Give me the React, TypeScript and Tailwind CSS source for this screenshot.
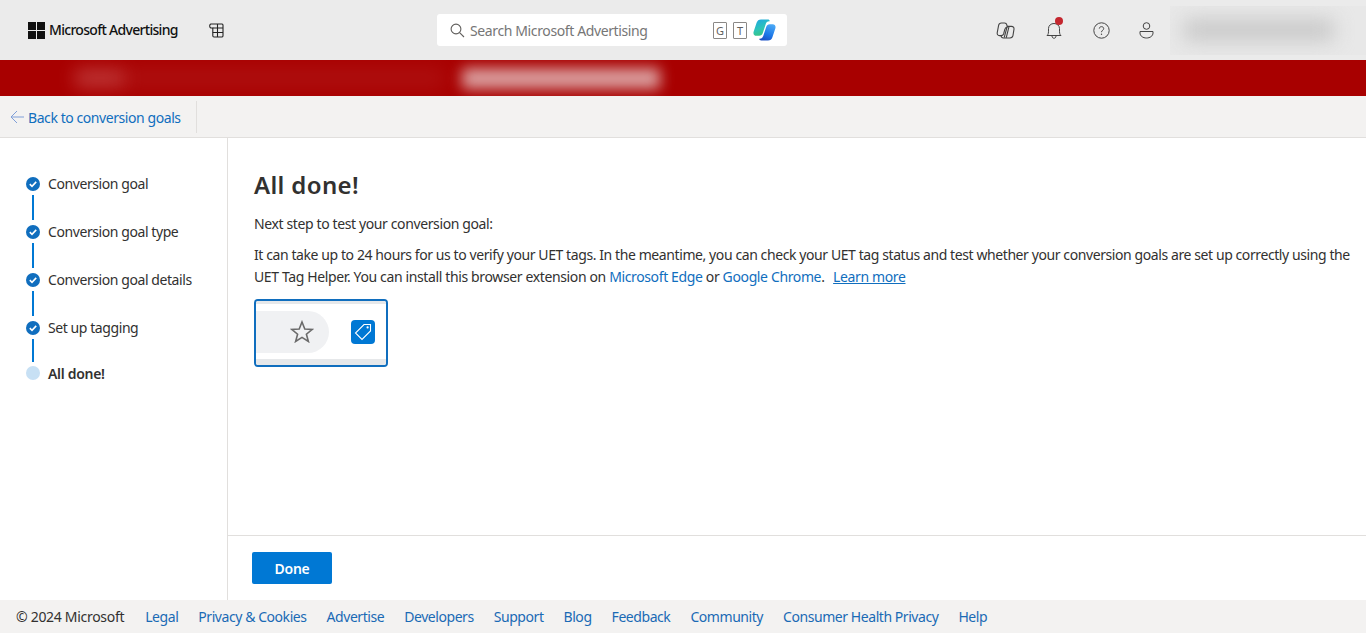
import React from "react";

function WinLogo() {
  return (
    <svg width="17" height="17" viewBox="0 0 17 17" className="shrink-0">
      <rect x="0" y="0" width="8" height="8" fill="#111" />
      <rect x="9" y="0" width="8" height="8" fill="#111" />
      <rect x="0" y="9" width="8" height="8" fill="#111" />
      <rect x="9" y="9" width="8" height="8" fill="#111" />
    </svg>
  );
}

function Check() {
  return (
    <span className="w-[14px] h-[14px] rounded-full bg-[#106ebe] flex items-center justify-center shrink-0">
      <svg width="10" height="10" viewBox="0 0 10 10" fill="none">
        <path d="M1.8 5.2 L4 7.3 L8.2 2.9" stroke="#fff" strokeWidth="1.6" />
      </svg>
    </span>
  );
}

const steps = ["Conversion goal", "Conversion goal type", "Conversion goal details", "Set up tagging"];
const footer = ["Legal", "Privacy & Cookies", "Advertise", "Developers", "Support", "Blog", "Feedback", "Community", "Consumer Health Privacy", "Help"];

export default function App() {
  return (
    <div className="w-[1366px] h-[633px] flex flex-col overflow-hidden bg-white text-[14px] text-[#323130] font-['Noto_Sans','Open_Sans',sans-serif]">
      {/* Top bar */}
      <header className="h-[60px] bg-[#ebebeb] flex items-center shrink-0">
        <div className="flex items-center pl-[28px] w-[437px] shrink-0">
          <WinLogo />
          <span className="ml-[4px] -mt-[2px] text-[14px] font-medium text-[#111] tracking-[-0.7px] whitespace-nowrap">Microsoft Advertising</span>
          <svg width="15" height="15" viewBox="0 0 15 15" fill="none" stroke="#222" strokeWidth="1.1" className="ml-[31px]">
            <path d="M2 1 H13 A1.2 1.2 0 0 1 14 2.2 V12.8 A1.2 1.2 0 0 1 13 14 H5 A1.2 1.2 0 0 1 3.8 12.8 V5 H2 A1.6 1.6 0 0 1 0.8 3 A1.6 1.6 0 0 1 2 1Z" />
            <path d="M3.8 5 H14 M3.8 9.5 H14 M8.5 5 V14 M8.5 1 V5" />
          </svg>
        </div>
        <div className="w-[350px] h-[32px] bg-white rounded-[3px] flex items-center pl-[13px] pr-[11px] shrink-0">
          <svg width="15" height="15" viewBox="0 0 15 15" fill="none" stroke="#605e5c" strokeWidth="1.1">
            <circle cx="6" cy="6" r="4.9" />
            <path d="M9.6 9.6 L14 14" />
          </svg>
          <span className="ml-[5px] text-[#767676] text-[14px] tracking-[-0.38px] whitespace-nowrap">Search Microsoft Advertising</span>
          <span className="ml-auto w-[14px] h-[17px] border border-[#8a8886] rounded-[1px] text-[11px] leading-[15px] text-center text-[#605e5c]">G</span>
          <span className="ml-[6px] w-[14px] h-[17px] border border-[#8a8886] rounded-[1px] text-[11px] leading-[15px] text-center text-[#605e5c]">T</span>
          <svg width="23" height="22" viewBox="0 0 23 22" className="ml-[6px]">
            <defs>
              <linearGradient id="cpa" x1="0.2" y1="0" x2="0.6" y2="1">
                <stop offset="0" stopColor="#1fa8e0" />
                <stop offset="0.55" stopColor="#2cc4b8" />
                <stop offset="1" stopColor="#3cc47a" />
              </linearGradient>
              <linearGradient id="cpb" x1="0.7" y1="0" x2="0.3" y2="1">
                <stop offset="0" stopColor="#4aa8f5" />
                <stop offset="0.6" stopColor="#1d78e8" />
                <stop offset="1" stopColor="#1c4fc4" />
              </linearGradient>
            </defs>
            <path d="M8 0.5 H14.8 C16 0.5 16.6 1.2 16.8 2.2 C14.5 2 13.3 3.2 12.6 5.4 L9.8 14 C9.2 15.8 8 16.8 6.2 16.8 H3.4 C1.2 16.8 0 15 0.6 12.8 L3.6 3.8 C4.3 1.7 5.8 0.5 8 0.5Z" fill="url(#cpa)" />
            <path d="M15 21.5 H8.2 C7 21.5 6.4 20.8 6.2 19.8 C8.5 20 9.7 18.8 10.4 16.6 L13.2 8 C13.8 6.2 15 5.2 16.8 5.2 H19.6 C21.8 5.2 23 7 22.4 9.2 L19.4 18.2 C18.7 20.3 17.2 21.5 15 21.5Z" fill="url(#cpb)" />
          </svg>
        </div>
        <div className="flex items-center ml-[209px] shrink-0">
          <svg width="19" height="17" viewBox="0 0 19 17" fill="none" stroke="#444" strokeWidth="1.1">
            <path d="M5.4 1 H8.6 C9.8 1 10.6 1.8 10.8 3 L11.4 5 C9.8 5 9.2 6 8.8 7.4 L7.6 12 C7.2 13.2 6.2 13.6 5 13.6 H3.4 C1.8 13.6 1 12.2 1.2 10.8 L2.6 3.4 C2.9 1.9 4 1 5.4 1Z" />
            <path d="M10.8 4.4 H15.4 C17.2 4.4 18.2 5.6 18 7.2 L17 13.4 C16.7 15 15.6 16 14 16 H7.4 C6.2 16 5.2 15 5 13.7" />
            <path d="M13 4.6 L10.2 15.8 M11 5 L8.2 15.6" />
          </svg>
          <div className="relative ml-[31px] w-[16px] h-[20px] -mt-[2px]">
            <svg width="16" height="20" viewBox="0 0 16 20" fill="none" stroke="#444" strokeWidth="1" className="mt-[2px]">
              <path d="M1 14.5 C2.5 13.5 2.5 11.5 2.5 9 V7.5 C2.5 4.5 5 2.5 8 2.5 C11 2.5 13.5 4.5 13.5 7.5 V9 C13.5 11.5 13.5 13.5 15 14.5Z" />
              <path d="M6 15 C6 18 10 18 10 15" />
            </svg>
            <span className="absolute -top-[2px] left-[9px] w-[8px] h-[8px] rounded-full bg-[#c4262e]" />
          </div>
          <svg width="17" height="17" viewBox="0 0 17 17" fill="none" className="ml-[31px]">
            <circle cx="8.5" cy="8.5" r="7.7" stroke="#444" strokeWidth="1" />
            <path d="M6.3 6.6 C6.3 4 10.7 4 10.7 6.6 C10.7 8.3 8.5 8.2 8.5 10.2" stroke="#444" strokeWidth="1" />
            <circle cx="8.5" cy="12.3" r="0.7" fill="#444" />
          </svg>
          <svg width="15" height="17" viewBox="0 0 15 17" fill="none" stroke="#444" strokeWidth="1" className="ml-[29px]">
            <circle cx="7.5" cy="4" r="3.3" />
            <path d="M1 9.5 H14 V11 C14 14 11 16 7.5 16 C4 16 1 14 1 11Z" />
          </svg>
          <div className="ml-[16px] w-[196px] h-[49px] bg-[#e8e8e8] overflow-hidden flex items-center justify-start pl-[14px]">
            <div className="w-[150px] h-[20px] bg-[#c6c6c6] blur-[10px]" />
          </div>
        </div>
      </header>

      {/* Red banner */}
      <div className="h-[36px] bg-[#a80000] shrink-0 flex items-center overflow-hidden">
        <div className="ml-[75px] w-[50px] h-[18px] bg-[#c85050] opacity-70 blur-[9px]" />
        <div className="w-[320px] h-[22px] bg-[#c04040] opacity-25 blur-[10px]" />
        <div className="ml-[17px] w-[198px] h-[21px] bg-[#e0b0b0] opacity-90 blur-[7px]" />
      </div>

      {/* Back bar */}
      <div className="h-[42px] bg-[#f3f2f1] border-b border-[#e1dfdd] flex items-center shrink-0">
        <div className="h-[32px] w-[197px] border-r border-[#e1dfdd] flex items-center pl-[10px]">
          <svg width="15" height="14" viewBox="0 0 15 14" fill="none" stroke="#7f9fd8" strokeWidth="1">
            <path d="M14 7 H1 M7 1 L1 7 L7 13" />
          </svg>
          <span className="ml-[3px] mt-[2px] text-[#106ebe] tracking-[-0.43px] whitespace-nowrap">Back to conversion goals</span>
        </div>
      </div>

      {/* Main */}
      <div className="flex flex-1 min-h-0">
        <aside className="w-[228px] shrink-0 border-r border-[#e1dfdd] pl-[26px] pt-[38px]">
          {steps.map((s, i) => (
            <div key={s} className="flex flex-col">
              <div className="flex items-center h-[16px]">
                <Check />
                <span className="ml-[8px] tracking-[-0.42px] leading-[16px] whitespace-nowrap">{s}</span>
              </div>
              {i < 3 ? (
                <div className="ml-[6px] w-[2px] h-[25px] mt-[3px] mb-[4px] bg-[#0078d4]" />
              ) : (
                <div className="ml-[6px] w-[2px] h-[23px] mt-[3px] mb-[4px] bg-[#0078d4]" />
              )}
            </div>
          ))}
          <div className="flex items-center h-[14px]">
            <span className="w-[14px] h-[14px] rounded-full bg-[#c7e0f4]" />
            <span className="ml-[8px] font-semibold tracking-[-0.3px]">All done!</span>
          </div>
        </aside>

        <div className="flex-1 min-w-0 flex flex-col">
          <main className="flex-1 min-h-0 pl-[26px] pt-[30px] border-b border-[#e1dfdd]">
            <h1 className="text-[24px] leading-[34px] font-semibold tracking-[0.35px] text-[#323130]">All done!</h1>
            <p className="mt-[12px] leading-[20px] tracking-[-0.38px]">Next step to test your conversion goal:</p>
            <p className="mt-[10px] leading-[22px] tracking-[-0.41px] whitespace-nowrap">
              It can take up to 24 hours for us to verify your UET tags. In the meantime, you can check your UET tag status and test whether your conversion goals are set up correctly using the
            </p>
            <div className="flex leading-[22px] tracking-[-0.37px] whitespace-pre">
              <span>UET Tag Helper. You can install this browser extension on </span>
              <span className="text-[#106ebe]">Microsoft Edge</span>
              <span> or </span>
              <span className="text-[#106ebe]">Google Chrome</span>
              <span>.  </span>
              <span className="ml-[2px] text-[#106ebe] underline">Learn more</span>
            </div>
            <div className="mt-[11px] w-[134px] h-[68px] border-2 border-[#106ebe] rounded-[4px] bg-white flex flex-col overflow-hidden">
              <div className="h-[3px] bg-[#e6e8ea]" />
              <div className="flex-1 flex items-center">
                <div className="w-[73px] h-[42px] bg-[#f0f1f3] rounded-r-[21px] flex items-center justify-end pr-[15px]">
                  <svg width="24" height="23" viewBox="0 0 24 23" fill="none" stroke="#6b6b6b" strokeWidth="1.6">
                    <path d="M12 2 L14.8 9 L22.3 9.4 L16.4 14.2 L18.4 21.5 L12 17.4 L5.6 21.5 L7.6 14.2 L1.7 9.4 L9.2 9Z" />
                  </svg>
                </div>
                <div className="ml-[22px] w-[24px] h-[24px] rounded-[4px] bg-[#0078d4] flex items-center justify-center">
                  <svg width="20" height="20" viewBox="0 0 20 20" fill="none" stroke="#fff" strokeWidth="1.1">
                    <path d="M11 2.5 H17.5 V9 L9 17.5 L2.5 11Z" />
                    <circle cx="14.6" cy="5.4" r="1.1" fill="#fff" stroke="none" />
                  </svg>
                </div>
              </div>
              <div className="h-[6px] bg-[#e6e8ea]" />
            </div>
          </main>
          <div className="h-[64px] shrink-0 pl-[24px] pt-[16px]">
            <button className="w-[80px] h-[32px] bg-[#0078d4] text-white font-semibold rounded-[2px] tracking-[-0.3px]">Done</button>
          </div>
        </div>
      </div>

      {/* Footer */}
      <footer className="h-[33px] bg-[#f3f2f1] flex items-center pl-[16px] shrink-0 whitespace-nowrap">
        <span className="mr-[21px] tracking-[-0.3px]">© 2024 Microsoft</span>
        <div className="flex gap-[20px] tracking-[-0.44px]">
          {footer.map((f) => (
            <span key={f} className="text-[#1a6ab5]">{f}</span>
          ))}
        </div>
      </footer>
    </div>
  );
}
